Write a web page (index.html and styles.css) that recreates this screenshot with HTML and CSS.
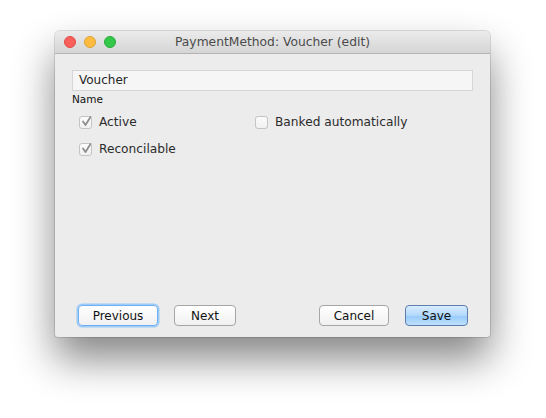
FILE: index.html
```html
<!DOCTYPE html>
<html>
<head>
<meta charset="utf-8">
<link rel="stylesheet" href="styles.css">
</head>
<body>
<div class="window">
  <div class="titlebar">
    <div class="lights">
      <span class="light red"></span>
      <span class="light yellow"></span>
      <span class="light green"></span>
    </div>
    <div class="title">PaymentMethod: Voucher (edit)</div>
  </div>
  <div class="content">
    <div class="field">Voucher</div>
    <div class="label">Name</div>
    <div class="checks">
      <label class="check"><span class="box checked"><svg viewBox="0 0 13 13" width="13" height="13"><path d="M3 6.5 L5.5 10 L10.5 2" fill="none" stroke="#8e8e8e" stroke-width="1.8" stroke-linecap="round" stroke-linejoin="round"/></svg></span>Active</label>
      <label class="check"><span class="box"></span>Banked automatically</label>
      <label class="check"><span class="box checked"><svg viewBox="0 0 13 13" width="13" height="13"><path d="M3 6.5 L5.5 10 L10.5 2" fill="none" stroke="#8e8e8e" stroke-width="1.8" stroke-linecap="round" stroke-linejoin="round"/></svg></span>Reconcilable</label>
    </div>
    <div class="spacer"></div>
    <div class="buttons">
      <div class="group">
        <button class="btn focus prev">Previous</button>
        <button class="btn next">Next</button>
      </div>
      <div class="group">
        <button class="btn cancel">Cancel</button>
        <button class="btn primary save">Save</button>
      </div>
    </div>
  </div>
</div>
</body>
</html>
```

FILE: styles.css
```css
html, body {
  margin: 0;
  padding: 0;
  background: #ffffff;
  width: 546px;
  height: 418px;
  overflow: hidden;
  font-family: "DejaVu Sans", "Liberation Sans", sans-serif;
}
.window {
  margin: 31px 0 0 55px;
  width: 435px;
  height: 306px;
  background: #ececec;
  border-radius: 5px 5px 3px 3px;
  box-shadow: 0 0 0 1px rgba(0,0,0,0.12), 0 22px 40px rgba(0,0,0,0.48);
  display: flex;
  flex-direction: column;
  overflow: hidden;
}
.titlebar {
  height: 22px;
  background: linear-gradient(#ebebeb, #d5d5d5);
  border-bottom: 1px solid #b3b3b3;
  display: flex;
  align-items: center;
  position: relative;
  flex: none;
}
.lights {
  display: flex;
  gap: 8px;
  padding-left: 9px;
}
.light {
  width: 12px;
  height: 12px;
  border-radius: 50%;
  box-sizing: border-box;
}
.red { background: #fc605c; border: 1px solid #de4a45; }
.yellow { background: #fdbc40; border: 1px solid #dea236; }
.green { background: #34c84a; border: 1px solid #27aa35; }
.title {
  position: absolute;
  left: 0;
  right: 0;
  top: 0;
  bottom: 0;
  text-align: center;
  line-height: 22px;
  font-size: 12.3px;
  color: #4b4b4b;
}
.content {
  flex: 1;
  display: flex;
  flex-direction: column;
  padding: 16px 17px 11px 17px;
}
.field {
  height: 19px;
  border: 1px solid #d6d6d6;
  background: #f6f6f6;
  font-size: 12px;
  color: #262626;
  line-height: 19px;
  padding-left: 6px;
}
.label {
  font-size: 10.5px;
  color: #111;
  margin-top: 2px;
  line-height: 13px;
}
.checks {
  display: grid;
  grid-template-columns: 176px 176px;
  row-gap: 9px;
  padding-left: 7px;
  margin-top: 7px;
}
.check {
  display: flex;
  align-items: center;
  font-size: 12.2px;
  color: #2b2b2b;
  height: 18px;
  gap: 7px;
}
.box {
  width: 13px;
  height: 13px;
  box-sizing: border-box;
  border: 1px solid #c4c4c4;
  border-radius: 3px;
  background: linear-gradient(#fbfbfb, #f1f1f1);
  position: relative;
  flex: none;
}
.box svg {
  position: absolute;
  left: 0;
  top: -2px;
}
.spacer { flex: 1; }
.buttons {
  display: flex;
  justify-content: space-between;
  padding: 0 5px 0 6px;
}
.group {
  display: flex;
  gap: 16px;
}
.btn {
  font-family: "DejaVu Sans", "Liberation Sans", sans-serif;
  font-size: 12px;
  color: #111;
  height: 21px;
  border: 1px solid #a6a6a6;
  border-radius: 4px;
  background: linear-gradient(#ffffff, #f1f1f1);
  padding: 0;
  margin: 0;
}
.prev { width: 80px; }
.next { width: 62px; }
.cancel { width: 70px; }
.save { width: 63px; }
.focus {
  border: 1px solid #6fb0f2;
  box-shadow: 0 0 0 1.5px #9ccbf8;
}
.primary {
  border: 1px solid #5e7fae;
  background: linear-gradient(#d9ecfd, #b2d9fd 50%, #95cafb 51%, #bfe0fd);
}
```
